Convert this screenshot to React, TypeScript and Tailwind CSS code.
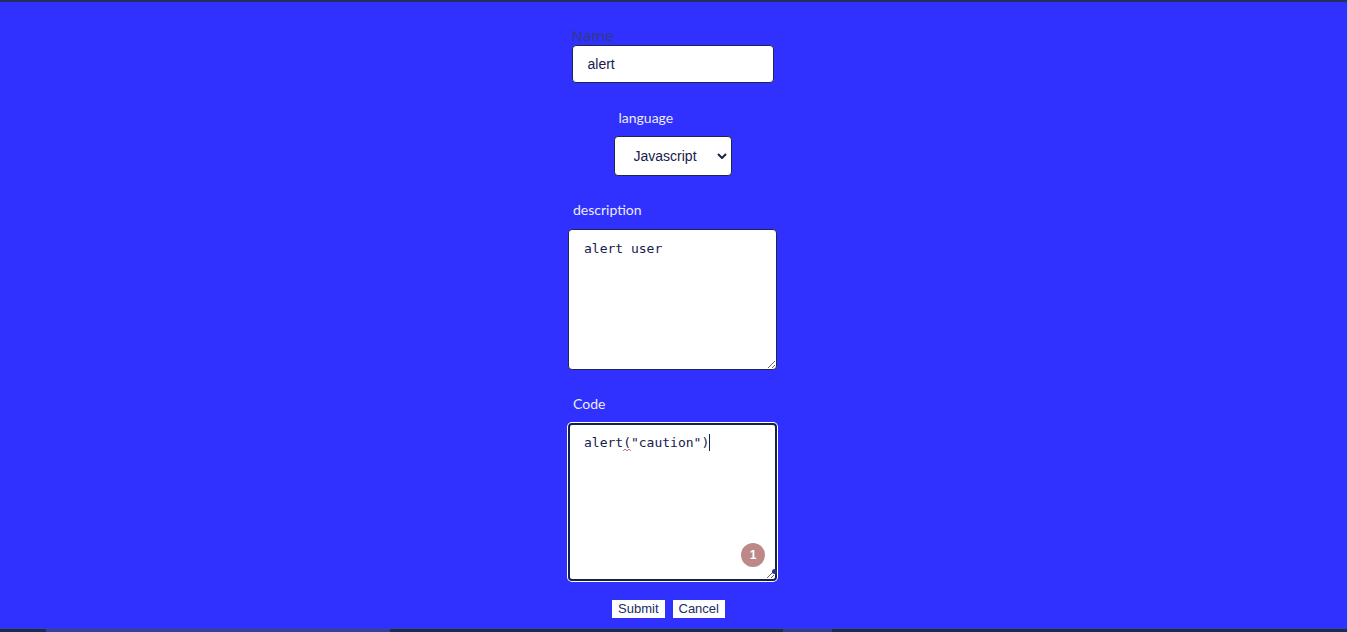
import { useState } from "react";

const labelText = "font-['Lato','Noto_Sans',sans-serif] text-[14px] leading-[18px] text-[#ececf8]";
const fieldText = "rounded-[4px] border border-[#1c2850] bg-white text-[#16204c] outline-none";
const buttonStyle =
  "h-[18px] bg-white px-[6px] text-[13px] leading-[18px] text-[#202c68]";

export default function App() {
  const [name, setName] = useState("alert");
  const [language, setLanguage] = useState("Javascript");
  const [description, setDescription] = useState("alert user");
  const [code, setCode] = useState('alert("caution")');

  return (
    <div className="flex min-h-screen flex-col border-r border-[#c8c8e8] bg-[#3030ff]">
      <div className="h-[2px] bg-[#20305c]" />
      <form
        className="flex flex-1 flex-col items-center pt-[24px] pr-[2px] pb-[10px] font-['Liberation_Sans',sans-serif]"
        onSubmit={(event) => event.preventDefault()}
      >
        <div className="flex w-[202px] flex-col gap-px">
          <label
            htmlFor="name"
            className="font-['Noto_Sans',sans-serif] text-[15px] leading-[18px] text-[#303c80]"
          >
            Name
          </label>
          <input
            id="name"
            type="text"
            value={name}
            onChange={(event) => setName(event.target.value)}
            className={`h-[38px] w-full px-[15px] text-[14px] ${fieldText}`}
          />
        </div>

        <div className="mt-[26px] flex w-[118px] flex-col gap-[9px]">
          <label htmlFor="language" className={`px-[5px] ${labelText}`}>
            language
          </label>
          <div className="relative">
            <select
              id="language"
              value={language}
              onChange={(event) => setLanguage(event.target.value)}
              className={`block h-[40px] w-full appearance-none pr-6 pl-[19px] text-[14px] ${fieldText}`}
            >
              <option>Javascript</option>
              <option>Python</option>
            </select>
            <svg
              aria-hidden="true"
              viewBox="0 0 10 6"
              className="pointer-events-none absolute top-[17px] right-[5px] h-[6px] w-[10px]"
            >
              <path d="M1 1l4 4 4-4" fill="none" stroke="#16204c" strokeWidth="2" />
            </svg>
          </div>
        </div>

        <div className="mt-[25px] flex w-[209px] flex-col gap-[10px]">
          <label htmlFor="description" className={`px-[5px] ${labelText}`}>
            description
          </label>
          <textarea
            id="description"
            value={description}
            onChange={(event) => setDescription(event.target.value)}
            className={`block h-[141px] w-full px-[15px] py-[11px] font-['DejaVu_Sans_Mono',monospace] text-[13px] leading-[16px] ${fieldText}`}
          />
        </div>

        <div className="mt-[25px] flex w-[209px] flex-col gap-[10px]">
          <label htmlFor="code" className={`px-[5px] ${labelText}`}>
            Code
          </label>
          <div className="relative">
            <textarea
              id="code"
              spellCheck={false}
              value={code}
              onChange={(event) => setCode(event.target.value)}
              className="block h-[158px] w-full rounded-[4px] border-2 border-[#16204c] bg-white px-[14px] py-[10px] font-['DejaVu_Sans_Mono',monospace] text-[13px] leading-[16px] text-[#16204c] ring-1 ring-white outline-none"
            />
            <span className="pointer-events-none absolute top-[11px] left-[141px] h-[17px] w-px bg-[#16204c]" />
            <svg
              aria-hidden="true"
              viewBox="0 0 8 4"
              className="pointer-events-none absolute top-[25px] left-[55px] h-[4px] w-[8px]"
            >
              <path d="M0 3l2-2 2 2 2-2 2 2" fill="none" stroke="#c07480" />
            </svg>
            <span className="pointer-events-none absolute right-[12px] bottom-[14px] flex size-[24px] items-center justify-center rounded-full bg-[#bc8888] text-[12px] font-bold text-white">
              1
            </span>
            <span className="pointer-events-none absolute right-0 bottom-[7px] size-[5px] rounded-full bg-[#26368c]" />
          </div>
        </div>

        <div className="mt-[19px] flex gap-2 pr-2">
          <button type="submit" className={buttonStyle}>
            Submit
          </button>
          <button type="button" className={buttonStyle}>
            Cancel
          </button>
        </div>
      </form>
      <div className="flex h-[4px] border-t border-[#3840b8] bg-[#1c2c50]">
        <div className="w-[46px]" />
        <div className="w-[344px] bg-[#34409c]" />
        <div className="w-[393px]" />
        <div className="w-[49px] bg-[#303c8c]" />
      </div>
    </div>
  );
}
